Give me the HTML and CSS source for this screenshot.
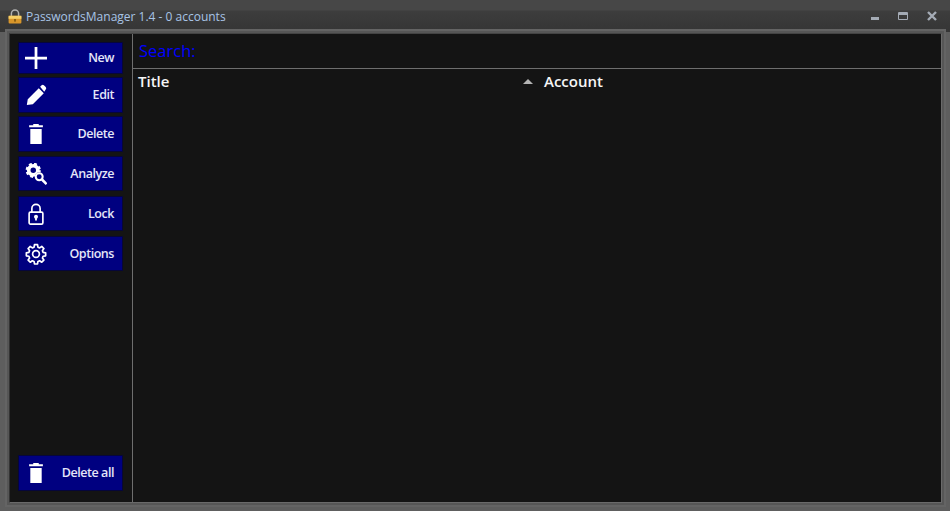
FILE: index.html
```html
<!DOCTYPE html>
<html lang="en">
<head>
<meta charset="utf-8">
<title>PasswordsManager</title>
<link rel="stylesheet" href="styles.css">
</head>
<body>
<div class="window">
  <header class="titlebar">
    <svg class="app-icon" viewBox="0 0 14 15" width="14" height="15">
      <path d="M3.400 7.500V4.600a3.600 3.600 0 0 1 7.200 0V7.500" fill="none" stroke="#b0b0b0" stroke-width="1.500"/>
      <rect x=".6" y="6.800" width="12.800" height="7.800" rx="1" fill="#d9962a"/>
      <rect x=".6" y="6.800" width="12.800" height="3" fill="#f6cf66"/>
      <rect x="6.200" y="10" width="1.600" height="2.600" fill="#7a5510"/>
    </svg>
    <span class="app-title">PasswordsManager 1.4 - 0 accounts</span>
    <div class="controls">
      <svg viewBox="0 0 10 10" width="10" height="10"><rect x="2" y="6" width="8" height="3" fill="#a4abb5"/></svg>
      <svg viewBox="0 0 10 10" width="10" height="10"><path d="M.5 1.500h9v7h-9z" fill="none" stroke="#a4abb5"/><rect x="1" y="1" width="8" height="3" fill="#a4abb5"/></svg>
      <svg viewBox="0 0 10 10" width="10" height="10"><path d="M1 1l8 8M9 1l-8 8" stroke="#a4abb5" stroke-width="2.400"/></svg>
    </div>
  </header>
  <div class="client">
    <aside class="sidebar">
      <div class="btn-group">
        <button class="btn btn-short"><svg class="ico" viewBox="0 0 24 24"><path d="M10.500 0h3v10.500H24v3H13.500V24h-3V13.500H0v-3h10.500z" fill="#fff"/></svg><span>New</span></button>
        <button class="btn btn-tall"><svg class="ico" viewBox="0 0 24 24"><path d="M2 23l1-6.500L15 4.500l5.500 5.500L8.500 22zM16.500 3l1.600-1.600a1.800 1.800 0 0 1 2.500 0l2 2a1.800 1.800 0 0 1 0 2.500L21 8.500z" fill="#fff"/></svg><span>Edit</span></button>
        <button class="btn btn-tall"><svg class="ico" viewBox="0 0 24 24"><path d="M4.500 2.500h4.500V1h6v1.500h4.500v2.200h-15zM5.800 6.500h12.400V23H5.800z" fill="#fff"/></svg><span>Delete</span></button>
        <button class="btn btn-sep"><svg class="ico" viewBox="0 0 24 24"><circle cx="9" cy="8" r="5" fill="none" stroke="#fff" stroke-width="4"/><circle cx="9" cy="8" r="6.800" fill="none" stroke="#fff" stroke-width="3" stroke-dasharray="3 2.340"/><circle cx="15.500" cy="15" r="4.800" fill="#000080"/><circle cx="15.500" cy="15" r="3.800" fill="none" stroke="#fff" stroke-width="2.200"/><path d="M18.500 18l5 5" stroke="#fff" stroke-width="2.800"/></svg><span>Analyze</span></button>
        <button class="btn btn-sep btn-wide-gap"><svg class="ico" viewBox="0 0 24 24"><path d="M7.500 10V6a4.500 4.500 0 0 1 9 0V10" fill="none" stroke="#fff" stroke-width="1.800"/><rect x="4.500" y="10" width="15" height="13" rx="1.500" fill="none" stroke="#fff" stroke-width="1.800"/><circle cx="12" cy="15" r="2.200" fill="#fff"/><path d="M11 16h2v3h-2z" fill="#fff"/></svg><span>Lock</span></button>
        <button class="btn btn-sep btn-wide-gap"><svg class="ico" viewBox="-1 -1 26 26"><path d="M10.200 1h3.600l.5 3 2 .8 2.500-1.700 2.500 2.500-1.700 2.500.8 2 3 .5v3.600l-3 .5-.8 2 1.700 2.500-2.500 2.500-2.500-1.700-2 .8-.5 3h-3.600l-.5-3-2-.8-2.500 1.700-2.500-2.500 1.700-2.500-.8-2-3-.5v-3.600l3-.5.8-2-1.700-2.500 2.500-2.500 2.500 1.700 2-.8z" fill="none" stroke="#fff" stroke-width="2" stroke-linejoin="round"/><circle cx="12" cy="12" r="4" fill="none" stroke="#fff" stroke-width="2"/></svg><span>Options</span></button>
      </div>
      <button class="btn btn-tall"><svg class="ico" viewBox="0 0 24 24"><path d="M4.500 2.500h4.500V1h6v1.500h4.500v2.200h-15zM5.800 6.500h12.400V23H5.800z" fill="#fff"/></svg><span>Delete all</span></button>
    </aside>
    <main class="main">
      <div class="search">Search:</div>
      <div class="columns">
        <div class="col col-title">Title<span class="sort"></span></div>
        <div class="col">Account</div>
      </div>
    </main>
  </div>
</div>
</body>
</html>
```
FILE: styles.css
```css
html, body {
  margin: 0;
  height: 100%;
  background: #5e5e5e;
}
.window {
  width: 950px;
  height: 511px;
  display: flex;
  flex-direction: column;
  overflow: hidden;
  background: #5e5e5e;
  font-family: "Open Sans", "Noto Sans", sans-serif;
}
.titlebar {
  height: 32px;
  box-sizing: border-box;
  padding: 11px 13px 0 8px;
  display: flex;
  align-items: flex-start;
  background: linear-gradient(#474747 0, #474747 10px, #3d3d3d 11px, #353535 100%);
  color: #a8c4e6;
}
.app-icon { flex: none; margin-top: -2px; }
.app-title {
  margin-left: 4px;
  font-size: 12px;
  line-height: 12px;
}
.controls {
  margin-left: auto;
  display: flex;
  gap: 19px;
}
.client {
  flex: 1;
  display: flex;
  margin: 1px 8px 8px 9px;
  background: #141414;
  border: 1px solid #6a6a6a;
  border-left-color: #333;
  border-top-color: #444;
  min-height: 0;
  box-shadow: 0 0 0 2px #565656, 0 0 0 4px #646464;
}
.sidebar {
  width: 123px;
  flex: none;
  box-sizing: border-box;
  padding: 8px 9px 11px 8px;
  border-right: 1px solid #6e6e6e;
  display: flex;
  flex-direction: column;
  justify-content: space-between;
}
.btn-group {
  display: flex;
  flex-direction: column;
  gap: 3px;
}
.btn {
  width: 105px;
  height: 35px;
  box-sizing: border-box;
  padding: 0 8px 0 5px;
  display: flex;
  align-items: center;
  justify-content: space-between;
  background: #000080;
  border: 1px solid #06063a;
  color: #e4e6f8;
  font: 600 12.500px "Open Sans", "Noto Sans", sans-serif;
  letter-spacing: -0.45px;
}
.btn span { margin-bottom: 1px; }
.btn-short { height: 32px; }
.btn-tall { height: 36px; }
.btn-sep { margin-top: 1px; }
.btn-wide-gap { margin-top: 2px; }
.ico { width: 22px; height: 22px; flex: none; margin-left: 1px; }
.main {
  flex: 1;
  min-width: 0;
}
.search {
  height: 35px;
  box-sizing: border-box;
  padding: 5px 0 0 6px;
  border-bottom: 1px solid #6e6e6e;
  color: #0000ff;
  font-size: 16.500px;
  font-weight: 500;
  line-height: 24px;
}
.columns {
  display: flex;
  padding-top: 1px;
  color: #f6f6f6;
  font-size: 15px;
  font-weight: 600;
  line-height: 22px;
}
.col { padding-left: 5px; }
.col-title {
  width: 406px;
  box-sizing: border-box;
  display: flex;
  justify-content: space-between;
  align-items: center;
  padding-right: 6px;
}
.sort {
  width: 0;
  height: 0;
  border-left: 5px solid transparent;
  border-right: 5px solid transparent;
  border-bottom: 5px solid #b4b4b4;
}
```
